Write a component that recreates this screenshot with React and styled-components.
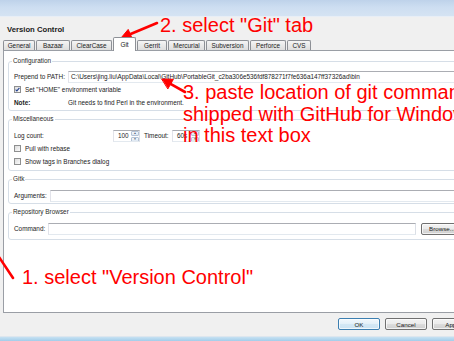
import React from "react";
import styled, { createGlobalStyle } from "styled-components";

const GlobalStyle = createGlobalStyle`
  body {
    margin: 0;
    background: #f0f0f0;
  }
`;

const Frame = styled.div`
  position: relative;
  width: 454px;
  height: 341px;
  overflow: hidden;
  display: flex;
  flex-direction: column;
  background: #f0f0f0;
  font-family: "Liberation Sans", Arial, sans-serif;
  font-size: 6.4px;
  color: #1b1b1b;
`;

const TitleBar = styled.div`
  flex: none;
  height: 16px;
  background: linear-gradient(#bed2ea, #cddef1 45%, #d5e3f3);
  border-bottom: 1px solid #e8eef6;
`;

const Body = styled.div`
  flex: none;
  width: 474px;
  display: flex;
  flex-direction: column;
  padding: 8px 0 0 3px;
  box-sizing: border-box;
`;

const PageTitle = styled.div`
  height: 9px;
  line-height: 9px;
  padding-left: 4px;
  font-weight: bold;
  font-size: 7.7px;
  color: #202020;
`;

const TabRow = styled.div`
  display: flex;
  align-items: flex-end;
  gap: 1px;
  height: 13px;
  margin-top: 3px;
  position: relative;
  z-index: 1;
`;

const Tab = styled.div`
  box-sizing: border-box;
  width: ${(p) => p.$w}px;
  height: ${(p) => (p.$active ? 14 : 10)}px;
  margin-bottom: ${(p) => (p.$active ? -1 : 0)}px;
  padding-bottom: ${(p) => (p.$active ? 1 : 0)}px;
  display: flex;
  align-items: center;
  justify-content: center;
  border: 1px solid #8d9096;
  border-bottom: none;
  border-radius: 2px 2px 0 0;
  background: ${(p) =>
    p.$active ? "#fff" : "linear-gradient(#f5f5f5, #e9e9e9 50%, #dedede)"};
  white-space: nowrap;
`;

const Pane = styled.div`
  flex: none;
  height: 263px;
  box-sizing: border-box;
  background: #fff;
  border: 1px solid #9a9ea5;
  padding: 6px 4px 0 4px;
  display: flex;
  flex-direction: column;
  gap: 4px;
`;

const Group = styled.fieldset`
  margin: 0;
  min-width: 0;
  border: 1px solid #d6dee7;
  border-radius: 3px;
  padding: ${(p) => p.$pt}px 5px ${(p) => p.$pb}px 5px;
  display: flex;
  flex-direction: column;
`;

const Legend = styled.legend`
  padding: 0 1px;
  margin-left: -2px;
  line-height: 8px;
  color: #2a2a2a;
`;

const Row = styled.div`
  display: flex;
  align-items: center;
  height: 13px;
`;

const FieldLabel = styled.span`
  flex: none;
  width: ${(p) => p.$w}px;
  margin-left: ${(p) => p.$ml || 0}px;
  font-weight: ${(p) => (p.$bold ? "bold" : "normal")};
  white-space: nowrap;
`;

const TextBox = styled.div`
  flex: ${(p) => (p.$w ? "none" : 1)};
  width: ${(p) => (p.$w ? `${p.$w}px` : "auto")};
  height: 12px;
  box-sizing: border-box;
  border: 1px solid;
  border-color: #abadb3 #dbdfe6 #e3e9ef #e2e3ea;
  display: flex;
  align-items: center;
  padding-left: 2px;
  white-space: nowrap;
  overflow: hidden;
  font-size: 6.4px;
`;

const SpinBox = styled(TextBox)`
  padding-left: 0;
  justify-content: space-between;
`;

const SpinValue = styled.span`
  padding-left: 4px;
`;

const SpinButtons = styled.div`
  flex: none;
  width: 8px;
  height: 100%;
  display: flex;
  flex-direction: column;
  gap: 1px;
`;

const SpinButton = styled.div`
  flex: 1;
  border: 1px solid #b4c3d6;
  border-radius: 1px;
  background: linear-gradient(#f4f8fc, #dde7f2);
  display: flex;
  align-items: center;
  justify-content: center;
  color: #4a5a70;
  font-size: 3px;
  line-height: 1;
`;

const CheckRow = styled(Row)`
  gap: 4px;
`;

const Check = styled.span`
  flex: none;
  width: 7px;
  height: 7px;
  box-sizing: border-box;
  border: 1px solid #8e8f8f;
  background: linear-gradient(135deg, #dcdcdc, #fbfbfb);
  display: flex;
  align-items: center;
  justify-content: center;
`;

const Footer = styled.div`
  flex: none;
  height: 23px;
  box-sizing: border-box;
  padding-top: 5px;
  display: flex;
  justify-content: flex-end;
  align-items: flex-start;
  gap: 5px;
`;

const Button = styled.div`
  flex: none;
  width: ${(p) => p.$w || 42}px;
  height: 12px;
  box-sizing: border-box;
  border: 1px solid ${(p) => (p.$default ? "#3c7fb1" : "#707070")};
  border-radius: 2px;
  background: ${(p) =>
    p.$default
      ? "linear-gradient(#f2f8fc, #e3f0f9 50%, #d4e8f5 50%, #cce3f2)"
      : "linear-gradient(#f3f3f3, #ebebeb 50%, #dddddd 50%, #cfcfcf)"};
  box-shadow: inset 0 0 0 1px rgba(255, 255, 255, 0.7);
  display: flex;
  align-items: center;
  justify-content: center;
  white-space: nowrap;
  font-size: 6.2px;
`;

const BrowseButton = styled(Button)`
  margin-left: 5px;
`;

const BottomEdge = styled.div`
  flex: none;
  height: 4px;
  border-top: 1px solid #dde6ee;
  background: linear-gradient(#c6e1f2, #a3cdea);
`;

const Callout = styled.div`
  position: absolute;
  top: ${(p) => p.$top}px;
  left: ${(p) => p.$left}px;
  color: #ff0000;
  font-family: "Liberation Sans", Arial, sans-serif;
  font-size: 20px;
  line-height: ${(p) => p.$lh || 22}px;
  white-space: nowrap;
  pointer-events: none;
`;

const ArrowLayer = styled.svg`
  position: absolute;
  top: 0;
  left: 0;
  pointer-events: none;
`;

const tabs = [
  { name: "General", w: 32 },
  { name: "Bazaar", w: 34 },
  { name: "ClearCase", w: 41 },
  { name: "Git", w: 23, active: true },
  { name: "Gerrit", w: 30 },
  { name: "Mercurial", w: 37 },
  { name: "Subversion", w: 43 },
  { name: "Perforce", w: 36 },
  { name: "CVS", w: 24 },
];

function CheckMark() {
  return (
    <svg width="5" height="5" viewBox="0 0 5 5">
      <polyline
        points="0.6,2.6 1.9,3.9 4.4,0.8"
        fill="none"
        stroke="#24418f"
        strokeWidth="1.1"
      />
    </svg>
  );
}

function CheckOption({ checked, children }) {
  return (
    <CheckRow>
      <Check>{checked && <CheckMark />}</Check>
      <span>{children}</span>
    </CheckRow>
  );
}

function Spinner({ value, w }) {
  return (
    <SpinBox $w={w}>
      <SpinValue>{value}</SpinValue>
      <SpinButtons>
        <SpinButton>▲</SpinButton>
        <SpinButton>▼</SpinButton>
      </SpinButtons>
    </SpinBox>
  );
}

function Arrows() {
  return (
    <ArrowLayer width="454" height="341" viewBox="0 0 454 341">
      <g stroke="#ff0000" strokeWidth="2.6" strokeLinecap="round" fill="#ff0000">
        <line x1="157" y1="23" x2="130" y2="34.3" />
        <polygon points="121,38 128.2,29.4 132.4,39" strokeWidth="1" />
        <line x1="185" y1="92" x2="170.5" y2="83.8" />
        <polygon points="162,79 173.4,79.3 168,88.6" strokeWidth="1" />
        <line x1="-3" y1="254" x2="13" y2="278" />
      </g>
    </ArrowLayer>
  );
}

export default function App() {
  return (
    <Frame>
      <GlobalStyle />
      <TitleBar />
      <Body>
        <PageTitle>Version Control</PageTitle>
        <TabRow>
          {tabs.map((t) => (
            <Tab key={t.name} $w={t.w} $active={t.active}>
              {t.name}
            </Tab>
          ))}
        </TabRow>
        <Pane>
          <Group $pt={5} $pb={1}>
            <Legend>Configuration</Legend>
            <Row>
              <FieldLabel $w={54}>Prepend to PATH:</FieldLabel>
              <TextBox>
                C:\Users\jing.liu\AppData\Local\GitHub\PortableGit_c2ba306e536fdf878271f7fe636a147ff37326ad\bin
              </TextBox>
            </Row>
            <CheckOption checked>Set "HOME" environment variable</CheckOption>
            <Row>
              <FieldLabel $w={54} $bold>
                Note:
              </FieldLabel>
              <span>Git needs to find Perl in the environment.</span>
            </Row>
          </Group>
          <Group $pt={6} $pb={2}>
            <Legend>Miscellaneous</Legend>
            <Row>
              <FieldLabel $w={99}>Log count:</FieldLabel>
              <Spinner value="100" w={27} />
              <FieldLabel $w={28} $ml={4}>
                Timeout:
              </FieldLabel>
              <Spinner value="60s" w={28} />
            </Row>
            <CheckOption>Pull with rebase</CheckOption>
            <CheckOption>Show tags in Branches dialog</CheckOption>
          </Group>
          <Group $pt={6} $pb={1}>
            <Legend>Gitk</Legend>
            <Row>
              <FieldLabel $w={36}>Arguments:</FieldLabel>
              <TextBox />
            </Row>
          </Group>
          <Group $pt={6} $pb={4}>
            <Legend>Repository Browser</Legend>
            <Row>
              <FieldLabel $w={34}>Command:</FieldLabel>
              <TextBox />
              <BrowseButton $w={42}>Browse...</BrowseButton>
            </Row>
          </Group>
        </Pane>
        <Footer>
          <Button $default>OK</Button>
          <Button>Cancel</Button>
          <Button>Apply</Button>
        </Footer>
      </Body>
      <BottomEdge />

      <Arrows />
      <Callout $top={14} $left={160}>
        2. select "Git" tab
      </Callout>
      <Callout $top={82} $left={183} $lh={21.5}>
        3. paste location of git command
        <br />
        shipped with GitHub for Windows
        <br />
        in this text box
      </Callout>
      <Callout $top={266} $left={22}>
        1. select "Version Control"
      </Callout>
    </Frame>
  );
}
